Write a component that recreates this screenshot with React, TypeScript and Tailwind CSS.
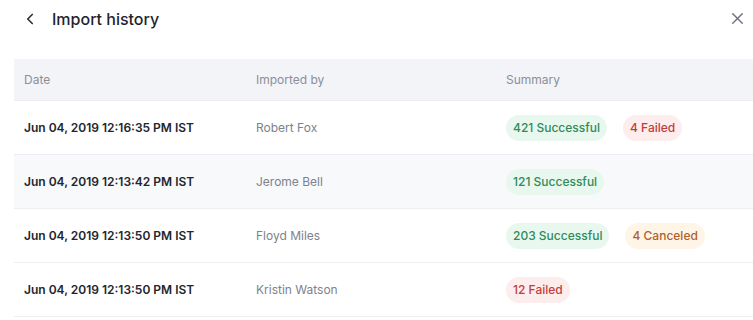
import { ChevronLeft, X } from "lucide-react";

type Badge = { label: string; tone: "success" | "failed" | "canceled" };

type ImportRow = {
  date: string;
  by: string;
  badges: Badge[];
  shaded?: boolean;
};

const rows: ImportRow[] = [
  {
    date: "Jun 04, 2019 12:16:35 PM IST",
    by: "Robert Fox",
    badges: [
      { label: "421 Successful", tone: "success" },
      { label: "4 Failed", tone: "failed" },
    ],
  },
  {
    date: "Jun 04, 2019 12:13:42 PM IST",
    by: "Jerome Bell",
    badges: [{ label: "121 Successful", tone: "success" }],
    shaded: true,
  },
  {
    date: "Jun 04, 2019 12:13:50 PM IST",
    by: "Floyd Miles",
    badges: [
      { label: "203 Successful", tone: "success" },
      { label: "4 Canceled", tone: "canceled" },
    ],
  },
  {
    date: "Jun 04, 2019 12:13:50 PM IST",
    by: "Kristin Watson",
    badges: [{ label: "12 Failed", tone: "failed" }],
  },
];

const toneClass = {
  success: "bg-[#e9f8ef] text-[#2f8a5c]",
  failed: "bg-[#fdeded] text-[#c23d3a]",
  canceled: "bg-[#fff5e6] text-[#b0602d]",
};

export default function App() {
  return (
    <main className="h-[320px] w-[753px] overflow-hidden bg-white font-['Inter',sans-serif] text-[#1f2430]">
      <header className="flex h-[37px] items-center pl-[18px] pr-[4px]">
        <button className="flex h-6 w-6 items-center justify-center text-[#2b2f38]">
          <ChevronLeft size={18} strokeWidth={2.2} />
        </button>
        <h1 className="ml-[10px] text-[16px] font-medium text-[#1f2430]">
          Import history
        </h1>
        <button className="ml-auto flex h-6 w-6 items-center justify-center text-[#6b7180]">
          <X size={19} strokeWidth={1.7} />
        </button>
      </header>

      <section className="mt-[22px] ml-[14px]">
        <div className="grid h-[42px] grid-cols-[232px_250px_1fr] items-center border-b border-[#eceef2] bg-[#f3f4f7] pl-[10px] text-[12px] text-[#8a8f9b]">
          <span>Date</span>
          <span>Imported by</span>
          <span>Summary</span>
        </div>

        {rows.map((row, i) => (
          <div
            key={i}
            className={`grid h-[54px] grid-cols-[232px_250px_1fr] items-center border-b border-[#eceef2] pl-[10px] text-[12px] ${
              row.shaded ? "bg-[#f8f9fb]" : "bg-white"
            }`}
          >
            <span className="font-semibold text-[#22262e]">{row.date}</span>
            <span className="text-[#7d828d]">{row.by}</span>
            <div className="flex items-center gap-[16px]">
              {row.badges.map((b) => (
                <span
                  key={b.label}
                  className={`flex h-[26px] items-center rounded-full px-[7px] text-[12px] font-medium ${toneClass[b.tone]}`}
                >
                  {b.label}
                </span>
              ))}
            </div>
          </div>
        ))}
      </section>
    </main>
  );
}
